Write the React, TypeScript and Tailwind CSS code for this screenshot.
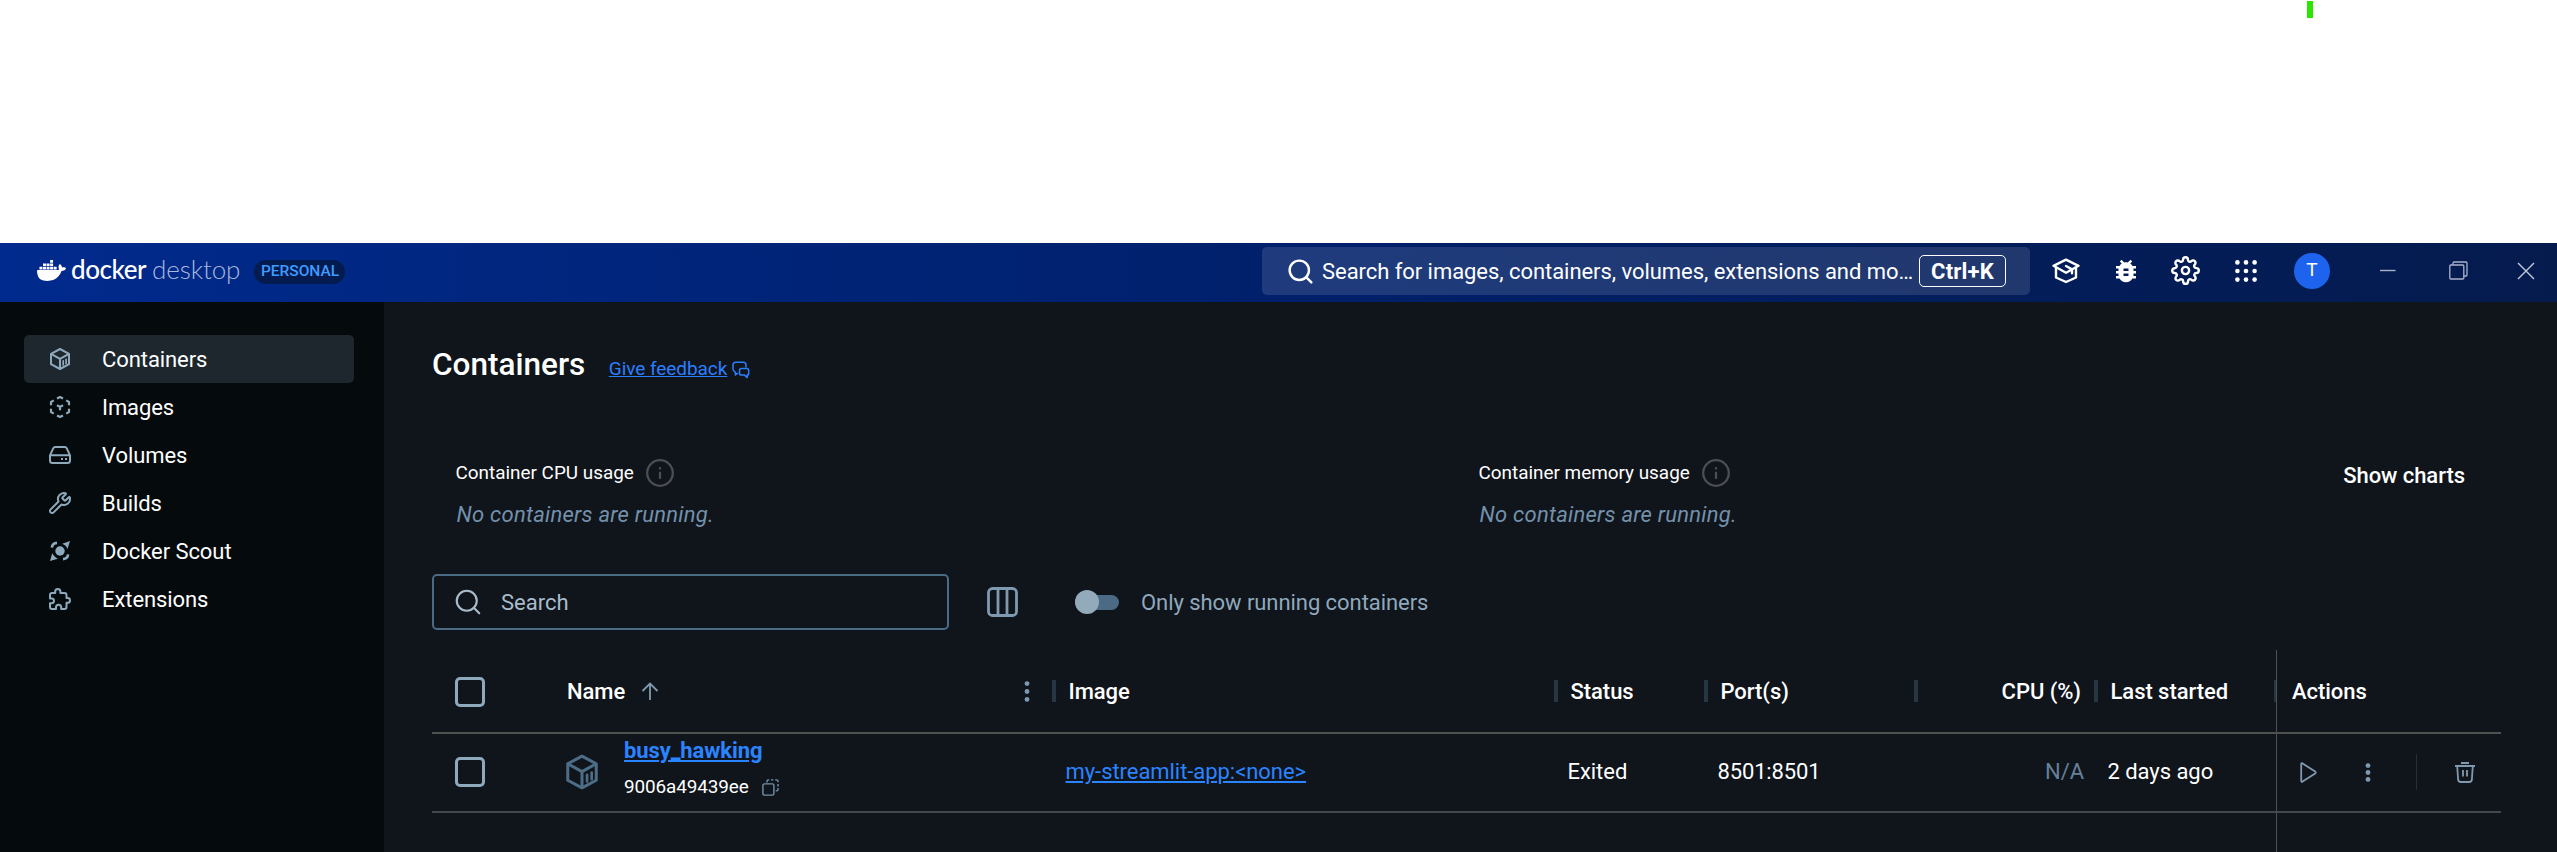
import type { ReactNode } from "react";
import { Search, Wrench } from "lucide-react";
import { FiSettings } from "react-icons/fi";
import { MdBugReport } from "react-icons/md";
import { SiDocker } from "react-icons/si";

function CubeIcon({ size, stroke = 2 }: { size: number; stroke?: number }) {
  return (
    <svg width={size} height={size} viewBox="0 0 24 24" fill="none" stroke="currentColor" strokeWidth={stroke} strokeLinejoin="round">
      <path d="M12 2 21 6.8v10.4L12 22l-9-4.8V6.8z" />
      <path d="M3 6.8l9 5 9-5M12 11.8V22" />
      <path d="M15.2 13.8v4.2M18.1 12.3v4.2" strokeWidth="1.7" strokeLinecap="round" />
    </svg>
  );
}

function ImagesIcon() {
  return (
    <svg width="24" height="24" viewBox="0 0 24 24" fill="none" stroke="currentColor" strokeWidth="2.2" strokeLinejoin="round">
      <path d="M9 3.5 12 2l3 1.5M18.2 5.4 21 7v3.2M21 13.8V17l-2.8 1.6M15 20.5 12 22l-3-1.5M5.8 18.6 3 17v-3.2M3 10.2V7l2.8-1.6" />
      <path d="M9 10.2l3 1.7 3-1.7M12 11.9v3.4" />
    </svg>
  );
}

function VolumesIcon() {
  return (
    <svg width="24" height="24" viewBox="0 0 24 24" fill="none" stroke="currentColor" strokeWidth="2" strokeLinejoin="round">
      <path d="M2 12.3 5.2 5.3Q5.8 4 7.2 4h9.6q1.4 0 2 1.3L22 12.3v5.2q0 2.5-2.5 2.5h-15Q2 20 2 17.5zM2 12.3h20" />
      <path d="M13 16.1h2M17 16.1h2" />
    </svg>
  );
}

function ScoutIcon() {
  return (
    <svg width="24" height="24" viewBox="0 0 24 24" fill="currentColor">
      <circle cx="12" cy="12" r="4.7" />
      <path d="M22 2l-7.8 2.7 2.7 1.6 1.3 1.3 1.3 2.3zM2 22l2.2-7.8 1.6 2.3 1.7 1.7 2.3 1.6z" />
      <path d="M3.9 8.6Q4.2 4.3 9 3.9M20.1 15.4Q19.8 19.7 15 20.1" fill="none" stroke="currentColor" strokeWidth="2.6" />
    </svg>
  );
}

function ExtensionsIcon() {
  return (
    <svg width="24" height="24" viewBox="0 0 24 24" fill="none" stroke="currentColor" strokeWidth="2" strokeLinejoin="round">
      <path d="M4 6h3.2V4.6a2.6 2.6 0 0 1 5.2 0V6h4.1a2 2 0 0 1 2 2v3h1.1a2.4 2.4 0 0 1 0 4.8h-1.1V20a2 2 0 0 1-2 2h-3.3v-1.6a2.6 2.6 0 0 0-5.2 0V22H4a2 2 0 0 1-2-2v-3.8h1.6a2.3 2.3 0 0 0 0-4.8H2V8a2 2 0 0 1 2-2z" />
    </svg>
  );
}

function LearnIcon() {
  return (
    <svg width="28" height="26" viewBox="0 0 28 26" fill="none" stroke="currentColor" strokeWidth="2.4" strokeLinejoin="round" strokeLinecap="round">
      <path d="M14 1.6 1.5 7.8 14 14.8 26.5 7.8z" />
      <path d="M4 10v9.5L14 24l10-4.5V10" />
      <path d="M14 8l6 3.4v3.8" />
    </svg>
  );
}

function GridIcon() {
  const c = [2.4, 11, 19.6];
  return (
    <svg width="22" height="22" viewBox="0 0 22 22" fill="currentColor">
      {c.map((y) => c.map((x) => <circle key={`${x}-${y}`} cx={x} cy={y} r="2.3" />))}
    </svg>
  );
}

function FeedbackIcon() {
  return (
    <svg width="18" height="18" viewBox="0 0 18 18" fill="none" stroke="currentColor" strokeWidth="1.5" strokeLinejoin="round">
      <path d="M6 12.4H5.2L3.4 14V11.2Q1 10.2 1 7.8V4Q1 1.2 3.8 1.2h7.4Q14 1.2 14 4v2.4" />
      <path d="M9.4 7.6h5.4q1.9 0 1.9 1.9v2.7q0 1.9-1.5 1.9v2.5l-2.6-2.5H9.4q-1.9 0-1.9-1.9V9.5q0-1.9 1.9-1.9z" />
    </svg>
  );
}

function InfoIcon() {
  return (
    <svg width="28" height="28" viewBox="0 0 28 28" fill="none" stroke="#4c4e52" strokeWidth="2.3">
      <circle cx="14" cy="14" r="12.8" />
      <path d="M14 12.8v7" />
      <path d="M14 8.2v2.2" />
    </svg>
  );
}

function Dots({ height }: { height: number }) {
  return (
    <svg width="6" height={height} viewBox={`0 0 6 ${height}`} fill="currentColor">
      <circle cx="3" cy="2.6" r="2.4" />
      <circle cx="3" cy={height / 2} r="2.4" />
      <circle cx="3" cy={height - 2.6} r="2.4" />
    </svg>
  );
}

function CopyIcon() {
  return (
    <svg width="17" height="17" viewBox="0 0 17 17" fill="none" stroke="currentColor" strokeWidth="1.4">
      <rect x="0.9" y="4.9" width="11" height="11.2" rx="1.6" />
      <path d="M5 3.4V2.2Q5 .9 6.3.9h1M9 .9h2.4M13.2.9h1.4q1.4 0 1.4 1.3v1M16 5v2.4M16 9v1.6q0 1.3-1.3 1.3h-1" />
    </svg>
  );
}

const NAV: { label: string; icon: ReactNode }[] = [
  { label: "Containers", icon: <CubeIcon size={24} /> },
  { label: "Images", icon: <ImagesIcon /> },
  { label: "Volumes", icon: <VolumesIcon /> },
  { label: "Builds", icon: <Wrench size={24} strokeWidth={2} /> },
  { label: "Docker Scout", icon: <ScoutIcon /> },
  { label: "Extensions", icon: <ExtensionsIcon /> },
];

function TitleBar() {
  return (
    <header className="flex h-[59px] shrink-0 items-center bg-linear-to-r from-[#002a8d] via-[#00206b] to-[#051b4e] text-white">
      <div className="flex h-full w-[1262px] items-center pb-1 pl-[37px]">
        <SiDocker size={29} />
        <div className="mb-1 ml-[5px] flex items-baseline gap-[4px] font-[Lato] text-[26px] leading-[30px]">
          <span className="w-[77px] font-medium tracking-[-0.45px]">docker</span>
          <span className="w-[90px] font-light tracking-[-0.1px] text-[#a9b8dc]">desktop</span>
        </div>
        <span className="mt-[2px] ml-[12px] flex h-6 w-[91px] items-center justify-center rounded-full bg-[#041b50] pl-px text-[15.5px] font-medium text-[#3f9bff]">
          PERSONAL
        </span>
      </div>
      <div className="mb-[3px] flex h-12 w-[768px] items-center rounded-[5px] bg-white/12 pl-6">
        <Search size={29} strokeWidth={2} />
        <span className="ml-[7px] w-[597px] whitespace-nowrap text-[22px] tracking-[-0.05px]">
          Search for images, containers, volumes, extensions and mo…
        </span>
        <kbd className="flex h-8 w-[87px] items-center justify-center rounded-[5px] border border-white font-[Roboto] text-[22px] font-bold tracking-[0.2px]">
          Ctrl+K
        </kbd>
      </div>
      <div className="flex flex-1 items-center pb-[4px]">
        <span className="ml-[22px]"><LearnIcon /></span>
        <MdBugReport size={30} className="ml-[31px]" />
        <FiSettings size={29} className="ml-[30px]" />
        <span className="ml-[35px]"><GridIcon /></span>
        <span className="ml-[37px] flex size-9 items-center justify-center rounded-full bg-[#1d63ed] text-[19px]">T</span>
        <svg className="ml-[50px]" width="16" height="20" viewBox="0 0 16 20" stroke="#aab3ca" strokeWidth="1.4">
          <path d="M0 9.5h15.5" />
        </svg>
        <svg className="ml-[53px]" width="19" height="19" viewBox="0 0 19 19" fill="none" stroke="#aab3ca" strokeWidth="1.3">
          <rect x="0.8" y="4" width="14" height="14" rx="1" />
          <path d="M4 3.8V1.9Q4 1 5 1h12q1 0 1 1v12q0 1-1 1h-2" />
        </svg>
        <svg className="ml-[49px]" width="18" height="18" viewBox="0 0 18 18" stroke="#c3cada" strokeWidth="1.4">
          <path d="M1 1l16 16M17 1 1 17" />
        </svg>
      </div>
    </header>
  );
}

function Sidebar() {
  return (
    <nav className="w-96 shrink-0 bg-[#050a0d] px-6 pt-[33px]">
      {NAV.map((item, i) => (
        <div
          key={item.label}
          className={`flex h-12 w-[330px] items-center rounded-[5px] pl-6 text-[22px] tracking-[-0.08px] text-white ${i === 0 ? "bg-[#1e272e]" : ""}`}
        >
          <span className="w-[54px] text-[#8fa9bc]">{item.icon}</span>
          <span>{item.label}</span>
        </div>
      ))}
    </nav>
  );
}

function Usage({ title, width }: { title: string; width: string }) {
  return (
    <div className={width}>
      <div className="flex h-[30px] items-center gap-[12px] text-[18.9px] text-white">
        <span>{title}</span>
        <InfoIcon />
      </div>
      <p className="mt-[12px] pl-px text-[22px] leading-[30px] tracking-[0.25px] text-[#7391ab] italic">No containers are running.</p>
    </div>
  );
}

function Checkbox() {
  return <span className="block size-[30px] rounded-[5px] border-3 border-[#8fa9bc]" />;
}

function HeadCell({ children, sep = true, end = false }: { children: ReactNode; sep?: boolean; end?: boolean }) {
  return (
    <div className="flex items-center">
      {sep && <span className="mr-[12.5px] h-[22px] w-1 bg-[#263642]" />}
      <div className={`flex flex-1 items-center ${end ? "justify-end pr-[13px]" : ""}`}>{children}</div>
    </div>
  );
}

const COLS = "grid grid-cols-[135px_485px_502px_150px_210px_180px_182px_225px]";

function ContainerTable() {
  return (
    <section className="flex flex-1 flex-col text-[22px] tracking-[-0.05px] text-white">
      <div className={`${COLS} h-[84px] border-b-2 border-[#4f5050] font-medium`}>
        <div className="flex items-center pt-[2px] pl-[23px]"><Checkbox /></div>
        <HeadCell sep={false}>
          <span className="pt-px">Name</span>
          <svg className="ml-[15.5px] text-[#7f9ab0]" width="18" height="18" viewBox="0 0 18 18" fill="none" stroke="currentColor" strokeWidth="1.8">
            <path d="M9 18V2M1.5 9 9 1.5 16.5 9" />
          </svg>
          <span className="mr-[22px] ml-auto pt-px text-[#7f9ab0]"><Dots height={21} /></span>
        </HeadCell>
        <HeadCell><span className="pt-px">Image</span></HeadCell>
        <HeadCell><span className="pt-px">Status</span></HeadCell>
        <HeadCell><span className="pt-px">Port(s)</span></HeadCell>
        <HeadCell end><span className="pt-px">CPU (%)</span></HeadCell>
        <div className="flex items-center">
          <span className="mr-[12.5px] h-[22px] w-1 bg-[#263642]" />
          <span className="flex-1 pt-px">Last started</span>
          <span className="h-[22px] w-[2px] bg-[#263642]" />
        </div>
        <div className="-mb-[2px] flex items-center border-l border-[#4f5050] pb-px pl-[15px]">Actions</div>
      </div>
      <div className={`${COLS} h-[79px] border-b-2 border-[#41494c]`}>
        <div className="flex items-center pb-px pl-[23px]"><Checkbox /></div>
        <div className="flex items-center">
          <span className="mb-px ml-[-4px] text-[#4d6d86]"><CubeIcon size={38} stroke={1.9} /></span>
          <div className="-mt-[7px] ml-[23px]">
            <div className="h-9 leading-9 font-bold tracking-[-0.1px] text-[#2a84ff] underline">busy_hawking</div>
            <div className="flex h-9 items-center gap-[13px] text-[18.9px] tracking-[-0.1px]">
              <span>9006a49439ee</span>
              <span className="text-[#7391ab]"><CopyIcon /></span>
            </div>
          </div>
        </div>
        <div className="flex items-center pb-[2px] pl-[13.5px] text-[#2a84ff] underline">my-streamlit-app:&lt;none&gt;</div>
        <div className="flex items-center pb-[2px] pl-[13.5px]">Exited</div>
        <div className="flex items-center pb-[2px] pl-[13.5px] tracking-[-0.15px]">8501:8501</div>
        <div className="flex items-center justify-end pr-[10px] pb-[2px] text-[#66819a]">N/A</div>
        <div className="flex items-center pb-[2px] pl-[13.5px]">2 days ago</div>
        <div className="-mb-[2px] flex items-center border-l border-[#4f5050] pb-[3px] pl-[22.5px] text-[#7f9ab0]">
          <svg width="17" height="21" viewBox="0 0 17 21" fill="none" stroke="currentColor" strokeWidth="1.8" strokeLinejoin="round">
            <path d="M1.2 2.2Q1.2.6 2.6 1.4L15.2 9.6q1.2.9 0 1.8L2.6 19.6q-1.4.8-1.4-.8z" />
          </svg>
          <span className="ml-[48.5px]"><Dots height={19} /></span>
          <span className="ml-[45px] h-9 w-px bg-[#2a2d31]" />
          <svg className="ml-[38px]" width="20" height="21" viewBox="0 0 20 21" fill="none" stroke="currentColor" strokeWidth="1.8">
            <path d="M6 1h8M0 4h20M2.2 4l.9 13.4q.2 2.6 2.6 2.6h8.6q2.4 0 2.6-2.6L17.8 4M8 8v6.5M12 8v6.5" />
          </svg>
        </div>
      </div>
      <div className={`${COLS} flex-1`}>
        <div className="col-start-8 border-l border-[#4f5050]" />
      </div>
    </section>
  );
}

function Main() {
  return (
    <main className="flex flex-1 flex-col bg-[#10141b] pt-[38px] pr-14 pl-12">
      <div className="flex h-[50px] items-center text-white">
        <h1 className="text-[31.5px] leading-[48px] font-medium">Containers</h1>
        <a className="mt-[9px] ml-[23.5px] flex items-center gap-[5px] text-[19px] tracking-[-0.05px] text-[#2a7fff]">
          <span className="underline">Give feedback</span>
          <FeedbackIcon />
        </a>
      </div>
      <div className="mt-[68px] flex h-[116px] pl-[23.5px]">
        <Usage title="Container CPU usage" width="w-[1023px]" />
        <Usage title="Container memory usage" width="flex-1" />
        <button className="mr-9 -mt-px h-9 text-[22px] font-medium tracking-[-0.05px] text-white">Show charts</button>
      </div>
      <div className="flex h-14 items-center">
        <div className="flex h-14 w-[517px] items-center rounded-[5px] border-2 border-[#4b6b84] pl-[18.5px] text-[22px] text-[#a9bccb]">
          <Search size={30} strokeWidth={1.7} />
          <span className="ml-[18.5px]">Search</span>
        </div>
        <svg className="ml-[38px] text-[#7f9ab0]" width="31" height="30" viewBox="0 0 31 30" fill="none" stroke="currentColor" strokeWidth="2.8">
          <rect x="1.5" y="1.5" width="28" height="27" rx="4" />
          <path d="M11 1.5v27M20 1.5v27" />
        </svg>
        <span className="ml-[57px] flex h-[15px] w-[44px] items-center rounded-full bg-[#4b6b84]">
          <span className="size-6 shrink-0 rounded-full bg-[#93aaba]" />
        </span>
        <span className="ml-[22px] text-[22px] tracking-[-0.06px] text-[#8fa9bc]">Only show running containers</span>
      </div>
      <div className="flex flex-1 flex-col pt-5">
        <ContainerTable />
      </div>
    </main>
  );
}

export default function App() {
  return (
    <div className="flex h-[852px] w-[2557px] flex-col overflow-hidden bg-white font-[Roboto,sans-serif]">
      <div className="h-[243px] shrink-0 pt-px pl-[2307px]">
        <div className="h-[17px] w-[6px] bg-[#2ae600]" />
      </div>
      <TitleBar />
      <div className="flex flex-1">
        <Sidebar />
        <Main />
      </div>
    </div>
  );
}
